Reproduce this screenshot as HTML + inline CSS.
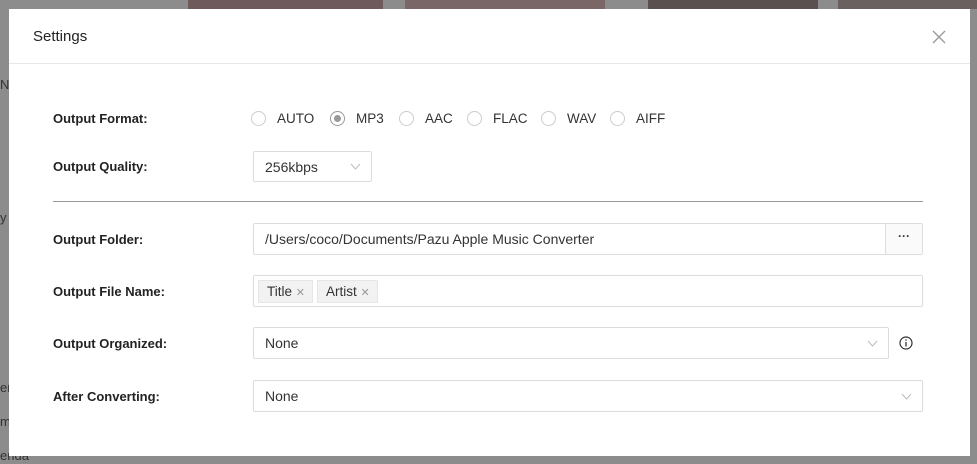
<!DOCTYPE html>
<html><head><meta charset="utf-8"><style>
*{box-sizing:border-box;margin:0;padding:0}
body{width:977px;height:464px;background:#8c8c8c;font-family:"Liberation Sans",sans-serif;position:relative;overflow:hidden}
.bg{position:absolute;color:#333;font-size:13px}
.img{position:absolute;top:0;height:9px}
.modal{position:absolute;left:9px;top:9px;width:961px;height:447px;background:#fff}
.title{position:absolute;left:24px;top:19px;font-size:15px;color:#222}
.close{position:absolute;left:923px;top:21px;}
.hd{position:absolute;left:0;right:0;top:54px;border-top:1px solid #e8e8e8}
.lbl{position:absolute;left:44px;font-size:13px;font-weight:bold;color:#222}
.inp{position:absolute;border:1px solid #dcdcdc;border-radius:2px;font-size:14px;color:#333;padding-left:11px;display:flex;align-items:center}
.chev{position:absolute;right:10px;top:9px}
.radio{position:absolute;top:102px;font-size:13.5px;color:#333;display:flex;align-items:center}
.radio i{display:inline-block;width:15px;height:15px;border:1px solid #ccc;border-radius:50%;margin-right:11px;position:relative}
.radio i.on{border-color:#999}
.radio i.on:after{content:"";position:absolute;left:3px;top:3px;width:7px;height:7px;border-radius:50%;background:#999}
.tag{display:inline-block;background:#f2f2f2;border:1px solid #e6e6e6;font-size:13.5px;padding:3px 7px 3px 8px;margin-right:4px;color:#333}
.tag span{color:#999;font-size:11px}
</style></head><body>
<div class="img" style="left:188px;width:195px;background:#6e5a5a"></div>
<div class="img" style="left:405px;width:200px;background:#7a6666"></div>
<div class="img" style="left:648px;width:170px;background:#5a5050"></div>
<div class="img" style="left:838px;width:139px;background:#6a6060"></div>
<div class="bg" style="left:0;top:77px">No</div>
<div class="bg" style="left:0;top:210px">y</div>
<div class="bg" style="left:0;top:380px">er</div>
<div class="bg" style="left:0;top:414px">m</div>
<div class="bg" style="left:0;top:448px">enda</div>
<div class="modal">
<div class="title">Settings</div>
<svg class="close" width="14" height="14" viewBox="0 0 14 14"><path d="M1 1L13 13M13 1L1 13" stroke="#999" stroke-width="1.3"/></svg>
<div class="hd"></div>
<div class="lbl" style="top:102px">Output Format:</div>
<div class="radio" style="left:242px"><i></i>AUTO</div>
<div class="radio" style="left:321px"><i class="on"></i>MP3</div>
<div class="radio" style="left:390px"><i></i>AAC</div>
<div class="radio" style="left:458px"><i></i>FLAC</div>
<div class="radio" style="left:532px"><i></i>WAV</div>
<div class="radio" style="left:601px"><i></i>AIFF</div>
<div class="lbl" style="top:150px">Output Quality:</div>
<div class="inp" style="left:244px;top:142px;width:119px;height:31px">256kbps<svg class="chev" width="11" height="11" viewBox="0 0 11 11"><path d="M1 3L5.5 8L10 3" fill="none" stroke="#bbb"/></svg></div>
<div style="position:absolute;left:44px;top:192px;width:870px;border-top:1px solid #999"></div>
<div class="lbl" style="top:223px">Output Folder:</div>
<div class="inp" style="left:244px;top:214px;width:670px;height:32px">/Users/coco/Documents/Pazu Apple Music Converter
<div style="position:absolute;right:0;top:0;width:37px;height:30px;border-left:1px solid #dcdcdc;background:#fafafa;text-align:center;font-size:12px;line-height:24px;font-weight:bold">···</div></div>
<div class="lbl" style="top:275px">Output File Name:</div>
<div class="inp" style="left:244px;top:266px;width:670px;height:32px;padding-left:4px"><span class="tag">Title <span>✕</span></span><span class="tag">Artist <span>✕</span></span></div>
<div class="lbl" style="top:327px">Output Organized:</div>
<div class="inp" style="left:244px;top:318px;width:636px;height:32px">None<svg class="chev" width="11" height="11" viewBox="0 0 11 11" style="top:10px"><path d="M1 3L5.5 8L10 3" fill="none" stroke="#bbb"/></svg></div>
<svg style="position:absolute;left:890px;top:327px" width="14" height="14" viewBox="0 0 14 14"><circle cx="7" cy="7" r="6" fill="none" stroke="#333" stroke-width="1.2"/><path d="M7 6V10.5" stroke="#333" stroke-width="1.3"/><circle cx="7" cy="4" r="0.8" fill="#333"/></svg>
<div class="lbl" style="top:380px">After Converting:</div>
<div class="inp" style="left:244px;top:371px;width:670px;height:32px">None<svg class="chev" width="11" height="11" viewBox="0 0 11 11" style="top:10px"><path d="M1 3L5.5 8L10 3" fill="none" stroke="#bbb"/></svg></div>
</div>
</body></html>
